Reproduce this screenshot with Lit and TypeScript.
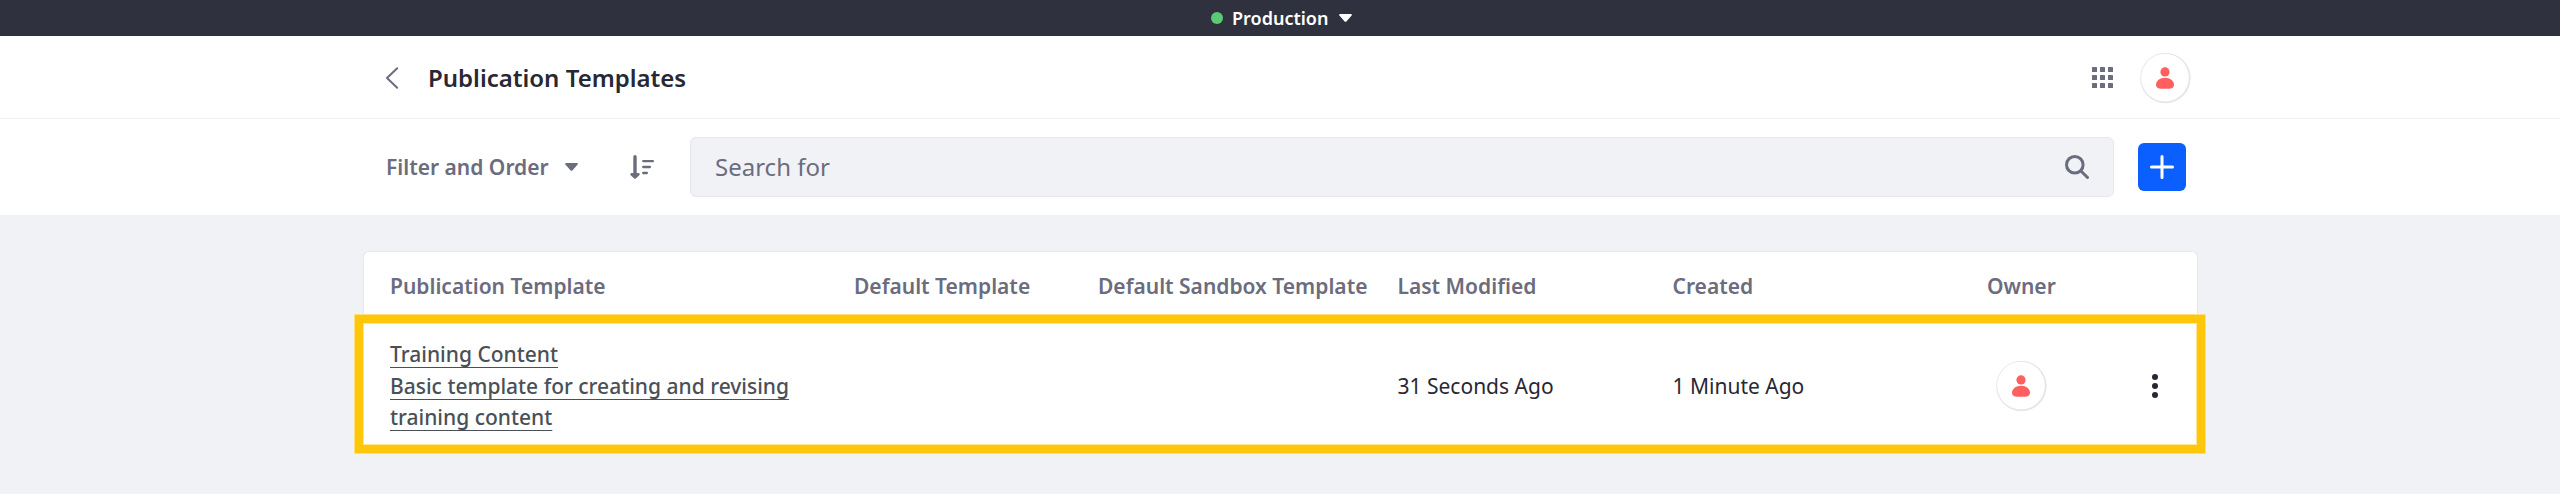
import { LitElement, html, css, svg } from "lit";
import { customElement, property } from "lit/decorators.js";

const caret = html`<svg class="caret" viewBox="0 0 13 8"><path d="M1 0H12Q13.2 .4 12.6 1.4L7.4 7.4Q6.5 8.3 5.6 7.4L.4 1.4Q-.2 .4 1 0Z" fill="currentColor"/></svg>`;

@customElement("user-avatar")
export class UserAvatar extends LitElement {
  static styles = css`
    :host { display: block; width: 51px; height: 51px; flex: none; }
    svg { display: block; width: 51px; height: 51px; }
  `;
  render() {
    return html`<svg viewBox="0 0 51 51">
      <circle cx="25.4" cy="25" r="25.2" fill="#e4e4eb"/>
      <circle cx="25" cy="24.7" r="23.9" fill="#fff"/>
      <circle cx="25" cy="18.9" r="4.6" fill="#ff5f5f"/>
      <path d="M25 24.7C30.2 24.7 34 28 34 31.6C34 34.6 31.9 35.7 29.2 35.7H20.8C18.1 35.7 16 34.6 16 31.6C16 28 19.8 24.7 25 24.7Z" fill="#ff5f5f"/>
    </svg>`;
  }
}

interface Template {
  name: string;
  description: string;
  modified: string;
  created: string;
}

@customElement("template-table")
export class TemplateTable extends LitElement {
  @property({ attribute: false }) rows: Template[] = [];

  static styles = css`
    :host { display: block; }
    .card {
      width: 1835px; box-sizing: border-box; margin-left: 363px; height: 63px;
      background: #fff; border: 1px solid #e7e7ed; border-bottom: 0;
      border-radius: 6px 6px 0 0; padding: 0 0 0 26px;
    }
    .cols { display: grid; grid-template-columns: 464px 244px 299.5px 275px 314.5px 1fr; }
    .head { color: #6b6c7e; font-weight: 600; line-height: 32px; padding-top: 18px; white-space: nowrap; }
    .row {
      box-sizing: border-box; width: 1850px; height: 138px; margin: 1px 0 0 355px;
      border: 8px solid #ffc60a; background: #fff; color: #272833;
      box-shadow: 0 0 0 1px #ffe07a, inset 0 0 0 1px #ffe694;
      padding: 5px 0 0 27px; align-items: center;
    }
    .name { color: #495057; line-height: 31.5px; width: 418px; font-weight: 500; }
    .name span { text-decoration: underline; text-decoration-thickness: 1px; text-underline-offset: 5px; }
    .time { padding-bottom: 2px; }
    .owner { display: flex; align-items: center; justify-content: space-between; padding: 0 39px 0 9px; }
    .dots { width: 6px; height: 24px; display: block; margin-bottom: 1px; }
  `;

  render() {
    return html`
      <div class="card">
        <div class="cols head">
          <div>Publication Template</div><div>Default Template</div><div>Default Sandbox Template</div>
          <div>Last Modified</div><div>Created</div><div>Owner</div>
        </div>
      </div>
      ${this.rows.map((r) => html`
        <div class="cols row">
          <div class="name"><span>${r.name}</span><br /><span>${r.description}</span></div>
          <div></div><div></div>
          <div class="time">${r.modified}</div>
          <div class="time">${r.created}</div>
          <div class="owner">
            <user-avatar></user-avatar>
            <svg class="dots" viewBox="0 0 6 24" fill="#272833">
              <circle cx="3" cy="3" r="3"/><circle cx="3" cy="12" r="3"/><circle cx="3" cy="21" r="3"/>
            </svg>
          </div>
        </div>`)}
    `;
  }
}

@customElement("app-root")
export class AppRoot extends LitElement {
  static styles = css`
    :host {
      display: block; height: 494px; overflow: hidden; background: #f1f2f5;
      font-family: "Noto Sans", "Open Sans", sans-serif; font-size: 21px; color: #272833;
    }
    svg { display: block; flex: none; }
    .env {
      height: 36px; background: #30313f; color: #fff; display: flex; align-items: center;
      padding-left: 1211px; font-size: 18px; font-weight: 600; box-sizing: border-box; line-height: 36px;
    }
    .status { width: 12px; height: 12px; border-radius: 50%; background: #5aca75; margin-right: 9px; }
    .caret { width: 13px; height: 8px; }
    .env .caret { margin-left: 11px; }
    .header {
      height: 83px; box-sizing: border-box; background: #fff; border-bottom: 1px solid #f1f2f5;
      display: flex; align-items: center; padding: 3px 369px 0 385px;
    }
    .back { width: 14px; height: 24px; margin: 0 29px 1px 0; }
    .title { font-size: 24px; font-weight: 600; flex: 1; margin: 0 0 2px; line-height: 36px; }
    .apps { width: 21px; height: 21px; margin: 0 27px 2px 0; }
    .toolbar {
      height: 96px; background: #fff; color: #6b6c7e; display: flex; align-items: center;
      padding: 0 374px 0 386px; box-sizing: border-box;
    }
    .filter { display: flex; align-items: center; font-weight: 600; width: 244px; gap: 16px; white-space: nowrap; }
    .sort { width: 24px; height: 24px; margin-right: 36px; }
    .search {
      flex: 1; height: 60px; box-sizing: border-box; background: #f1f2f5; border: 1px solid #e7e7ed;
      border-radius: 6px; display: flex; align-items: center; justify-content: space-between;
      padding: 0 24px; font-size: 24px; margin-right: 24px;
    }
    .hint { margin-bottom: 2px; }
    .lens { width: 24px; height: 24px; }
    .add { width: 48px; height: 48px; border-radius: 6px; background: #0b5fff; display: grid; place-items: center; }
    .plus { width: 24px; height: 24px; }
    template-table { margin-top: 36px; }
  `;

  private rows: Template[] = [
    {
      name: "Training Content",
      description: "Basic template for creating and revising training content",
      modified: "31 Seconds Ago",
      created: "1 Minute Ago",
    },
  ];

  render() {
    const cells = [0, 8, 16];
    return html`
      <div class="env"><span class="status"></span><span>Production</span>${caret}</div>
      <div class="header">
        <svg class="back" viewBox="0 0 14 24"><path d="M12.2 2.2L2 12L12.2 21.8" fill="none" stroke="#6b6c7e" stroke-width="2" stroke-linecap="round" stroke-linejoin="round"/></svg>
        <h1 class="title">Publication Templates</h1>
        <svg class="apps" viewBox="0 0 21 21" fill="#6b6c7e">
          ${cells.map((y) => cells.map((x) => svg`<rect x=${x} y=${y} width="5" height="5" rx=".6"/>`))}
        </svg>
        <user-avatar></user-avatar>
      </div>
      <div class="toolbar">
        <div class="filter"><span>Filter and Order</span>${caret}</div>
        <svg class="sort" viewBox="0 0 24 24" fill="none" stroke="#6b6c7e" stroke-linecap="round" stroke-linejoin="round">
          <path d="M5 1.8V20" stroke-width="3.4"/><path d="M1.5 19.3H8.5L5 22.5Z" fill="#6b6c7e" stroke-width="2.4"/>
          <path d="M13.2 6.1H22.9M13.2 12H19.9M13.2 18H16.9" stroke-width="2.3"/>
        </svg>
        <div class="search"><span class="hint">Search for</span>
          <svg class="lens" viewBox="0 0 24 24" fill="none" stroke="#6b6c7e" stroke-width="3" stroke-linecap="round"><circle cx="9.8" cy="9.8" r="8.3"/><path d="M16.2 16.2L22.5 22.5"/></svg>
        </div>
        <div class="add"><svg class="plus" viewBox="0 0 24 24" stroke="#fff" stroke-width="3" stroke-linecap="round"><path d="M12 1.5V22.5M1.5 12H22.5"/></svg></div>
      </div>
      <template-table .rows=${this.rows}></template-table>
    `;
  }
}
